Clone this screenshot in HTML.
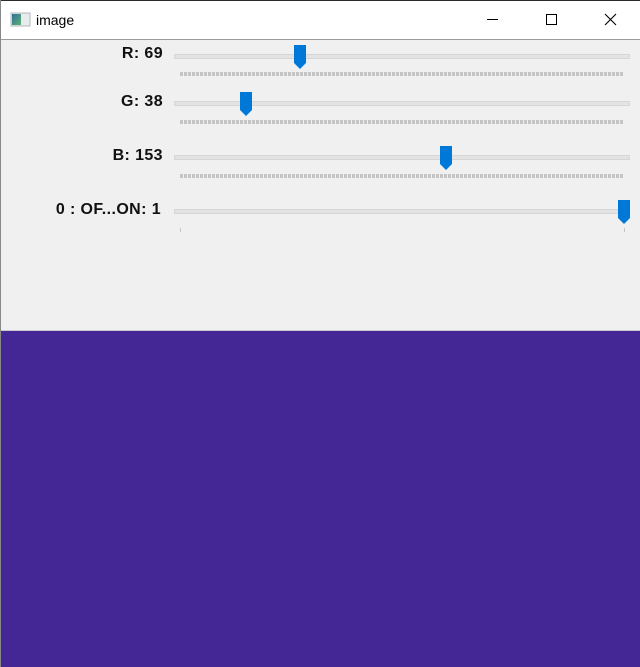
<!DOCTYPE html>
<html><head><meta charset="utf-8"><style>
html,body{margin:0;padding:0;width:640px;height:667px;overflow:hidden;background:#fff}
svg{display:block}
</style></head><body>
<svg width="640" height="667" xmlns="http://www.w3.org/2000/svg">
<defs>
<linearGradient id="ic" x1="0" x2="1" y1="0" y2="1"><stop offset="0" stop-color="#2f6fa0"/><stop offset="1" stop-color="#5fb070"/></linearGradient>
<g id="th"><path d="M0 0H12V18L6 24L0 18Z" fill="#0078d7"/></g>
</defs>
<rect x="0" y="0" width="640" height="39" fill="#fff"/>
<rect x="0" y="0" width="640" height="1" fill="#2b2b2b"/>
<rect x="0" y="0" width="1" height="667" fill="#888"/>
<rect x="11" y="13" width="19" height="13" fill="#e8ecec" stroke="#b0b8b8"/>
<rect x="12" y="14" width="9" height="11" fill="url(#ic)"/>
<text x="36" y="25" font-family="Liberation Sans, sans-serif" font-size="14" fill="#000">image</text>
<line x1="487" y1="19.5" x2="498" y2="19.5" stroke="#000"/>
<rect x="546.5" y="14.5" width="10" height="10" fill="none" stroke="#000"/>
<path d="M605 14L616 25M616 14L605 25" stroke="#000" stroke-width="1.1"/>
<rect x="1" y="39" width="639" height="1" fill="#9a9a9a"/>
<rect x="1" y="40" width="639" height="291" fill="#f0f0f0"/>
<rect x="1" y="330" width="639" height="1" fill="#c8c8d0"/>
<rect x="1" y="331" width="639" height="336" fill="#452695"/>
<g font-family="Liberation Sans, sans-serif" font-size="16" font-weight="bold" fill="#111" text-anchor="end" letter-spacing="0.4">
<text x="163" y="58">R: 69</text>
<text x="163" y="106">G: 38</text>
<text x="163" y="160">B: 153</text>
<text x="161" y="214">0 : OF...ON: 1</text>
</g>
<g fill="#e3e3e3" stroke="#d6d6d6" stroke-width="1">
<rect x="174.5" y="54.5" width="455" height="4"/>
<rect x="174.5" y="101.5" width="455" height="4"/>
<rect x="174.5" y="155.5" width="455" height="4"/>
<rect x="174.5" y="209.5" width="455" height="4"/>
</g>
<g stroke="#c4c4c4" stroke-width="4" stroke-dasharray="3 1">
<line x1="180" y1="74" x2="624" y2="74"/>
<line x1="180" y1="122" x2="624" y2="122"/>
<line x1="180" y1="176" x2="624" y2="176"/>
</g>
<g stroke="#c4c4c4" stroke-width="1">
<line x1="180.5" y1="228" x2="180.5" y2="232"/>
<line x1="624.5" y1="228" x2="624.5" y2="232"/>
</g>
<use href="#th" x="294" y="45"/>
<use href="#th" x="240" y="92"/>
<use href="#th" x="440" y="146"/>
<use href="#th" x="618" y="200"/>
</svg>
</body></html>
